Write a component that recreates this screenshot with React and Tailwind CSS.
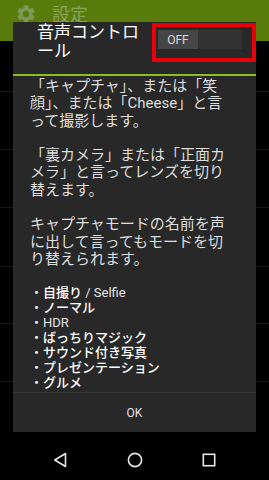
import { MdSettings } from 'react-icons/md';

const PARAGRAPHS = [
  ['「キャプチャ」、または「笑', '顔」、または「Cheese」と言', 'って撮影します。'],
  ['「裏カメラ」または「正面カ', 'メラ」と言ってレンズを切り', '替えます。'],
  ['キャプチャモードの名前を声', 'に出して言ってもモードを切', 'り替えられます。'],
];

const MODES = [
  { jp: '自撮り', en: ' / Selfie' },
  { jp: 'ノーマル' },
  { en: 'HDR' },
  { jp: 'ばっちりマジック' },
  { jp: 'サウンド付き写真' },
  { jp: 'プレゼンテーション' },
  { jp: 'グルメ' },
];

function NavBar() {
  return (
    <div className="h-[40px] flex items-center justify-between px-[53px] bg-black">
      <svg width="14" height="16" viewBox="0 0 14 16" fill="none" stroke="#e6e6e6" strokeWidth="1.6" strokeLinejoin="round">
        <path d="M12.5 1.5 L1.8 8 L12.5 14.5 Z" />
      </svg>
      <svg width="16" height="16" viewBox="0 0 16 16" fill="none" stroke="#e6e6e6" strokeWidth="1.6">
        <circle cx="8" cy="8" r="6.6" />
      </svg>
      <svg width="14" height="14" viewBox="0 0 14 14" fill="none" stroke="#e6e6e6" strokeWidth="1.6">
        <rect x="1.3" y="1.3" width="11.4" height="11.4" />
      </svg>
    </div>
  );
}

export default function App() {
  return (
    <div className="relative w-[269px] h-[480px] bg-black overflow-hidden font-[Roboto,'Noto_Sans_CJK_JP',sans-serif]">
      {/* dimmed settings screen behind the dialog */}
      <div className="h-[41px] bg-[#587b0c] flex items-start pt-[3px] pl-[15px] gap-[15px]">
        <MdSettings className="w-[22px] h-[22px] text-[#7f9658]" />
        <span className="text-[18px] leading-[24px] text-[#8aa25c]">設定</span>
      </div>
      <div className="h-[51px] border-b border-[#161616]" />
      <div className="h-[58px] border-b border-[#161616]" />
      <div className="h-[58px] border-b border-[#161616]" />
      <div className="h-[59px] border-b border-[#161616]" />
      <div className="h-[57px] border-b border-[#161616]" />
      <div className="h-[58px] border-b border-[#161616]" />
      <div className="h-[58px]" />
      <NavBar />

      {/* dialog */}
      <div className="absolute left-[13px] top-[22px] w-[243px] h-[410px] bg-[#282828] flex flex-col">
        <div className="h-[52px] flex items-start justify-between shrink-0">
          <div className="pl-[24px] pt-[1px] text-[17px] leading-[19px] text-white">
            音声コントロ<br />ール
          </div>
          <div className="mt-[1px] w-[104px] h-[39px] border-[4px] border-[#e8000b] pl-[2px] pt-[3px]">
            <div className="w-[84px] h-[19px] bg-[#323232] flex">
              <div className="w-[40px] h-[19px] bg-[#454545] flex items-center justify-center text-[12px] text-[#dadada]">
                OFF
              </div>
            </div>
          </div>
        </div>
        <div className="h-[2px] bg-[#86bf1f] shrink-0" />
        <div className="h-[316px] pl-[17px] pt-[2px] text-[15px] text-[#dedede] whitespace-nowrap">
          {PARAGRAPHS.map((lines, i) => (
            <p key={i} className="leading-[17.3px] mb-[17.3px]">
              {lines.map((l, j) => (
                <span key={j} className="block">{l}</span>
              ))}
            </p>
          ))}
          <ul className="text-[13px] leading-[15px] text-white -mt-[0.5px]">
            {MODES.map((m, i) => (
              <li key={i}>
                <span>・</span>
                {m.jp && <span className="font-medium">{m.jp}</span>}
                {m.en && <span className="text-[#e4e4e4]">{m.en}</span>}
              </li>
            ))}
          </ul>
        </div>
        <div className="h-[1px] bg-[#383838] shrink-0" />
        <button className="flex-1 flex items-center justify-center text-[12px] text-[#e2e2e2]">
          OK
        </button>
      </div>
    </div>
  );
}
